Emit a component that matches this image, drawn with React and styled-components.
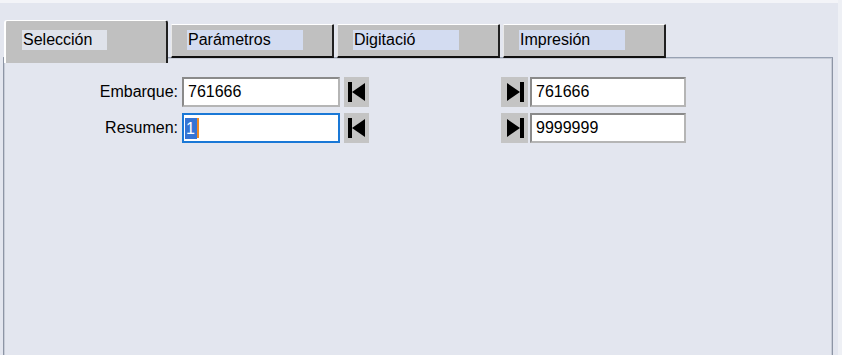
import styled, { createGlobalStyle } from "styled-components"

const Global = createGlobalStyle`
  html, body {
    margin: 0;
    padding: 0;
    background: #e3e6ef;
    font-family: "Liberation Sans", Arial, sans-serif;
  }
`

const tabs = [
  { label: "Selección", width: 85, active: true },
  { label: "Parámetros", width: 116 },
  { label: "Digitació", width: 106 },
  { label: "Impresión", width: 106 },
]

function FirstIcon() {
  return (
    <svg width="18" height="20" viewBox="0 0 18 20">
      <rect x="0" y="0" width="4" height="20" fill="#000" />
      <polygon points="4,10 17,1 17,19" fill="#000" />
    </svg>
  )
}

function LastIcon() {
  return (
    <svg width="18" height="20" viewBox="0 0 18 20">
      <polygon points="1,1 14,10 1,19" fill="#000" />
      <rect x="14" y="0" width="4" height="20" fill="#000" />
    </svg>
  )
}

export default function App() {
  return (
    <>
      <Global />
      <Window>
        <TopStrip />
        <TabStrip>
          {tabs.map((t) => (
            <Tab key={t.label} $active={t.active}>
              <TabLabel $active={t.active} style={{ width: t.width }}>
                {t.label}
              </TabLabel>
            </Tab>
          ))}
        </TabStrip>
        <Panel>
          <Row>
            <Label>Embarque:</Label>
            <Field>761666</Field>
            <NavButton>
              <FirstIcon />
            </NavButton>
            <Spacer />
            <NavButton $right>
              <LastIcon />
            </NavButton>
            <Field $narrow>761666</Field>
          </Row>
          <Row>
            <Label>Resumen:</Label>
            <Field $focused>
              <Selected>1</Selected>
              <Caret />
            </Field>
            <NavButton>
              <FirstIcon />
            </NavButton>
            <Spacer />
            <NavButton $right>
              <LastIcon />
            </NavButton>
            <Field $narrow>9999999</Field>
          </Row>
        </Panel>
      </Window>
    </>
  )
}

const Window = styled.div`
  width: 842px;
  height: 355px;
  overflow: hidden;
  display: flex;
  flex-direction: column;
  background: #e3e6ef;
  border-right: 4px solid #eef0f5;
  box-sizing: border-box;
`
const TopStrip = styled.div`
  height: 3px;
  background: #f3f4f8;
  margin-bottom: 17px;
`
const TabStrip = styled.div`
  display: flex;
  align-items: flex-start;
  height: 37px;
  padding-left: 4px;
  gap: 3px;
`
const Tab = styled.div`
  position: relative;
  z-index: ${(p) => (p.$active ? 2 : 1)};
  box-sizing: border-box;
  width: ${(p) => (p.$active ? 164 : 163)}px;
  height: ${(p) => (p.$active ? 43 : 34)}px;
  margin-top: ${(p) => (p.$active ? 0 : 4)}px;
  background: #c0c0c0;
  border-top: 1px solid #ffffff;
  border-left: ${(p) => (p.$active ? "2px solid #ffffff" : "1px solid #e8e8e8")};
  border-right: 2px solid #202020;
  border-bottom: ${(p) => (p.$active ? "none" : "2px solid #101010")};
  border-radius: ${(p) => (p.$active ? "3px 3px 0 0" : "1px 1px 0 0")};
  padding-top: ${(p) => (p.$active ? 9 : 5)}px;
  padding-left: ${(p) => (p.$active ? 16 : 15)}px;
`
const TabLabel = styled.div`
  height: 20px;
  line-height: 20px;
  background: ${(p) => (p.$active ? "#dfe2ea" : "#d3dcf1")};
  color: #000;
  font-size: 16px;
  padding-left: 1px;
  box-sizing: border-box;
`
const Panel = styled.div`
  flex: 1;
  width: 830px;
  margin-left: 3px;
  box-sizing: border-box;
  border-top: 1px solid #98a2b3;
  border-left: 1px solid #8d95a5;
  border-right: 1px solid #8d95a5;
  box-shadow: inset -1px 0 0 #c7ccd7, inset 1px 0 0 #c7ccd7, inset 0 1px 0 #c7ccd7;
  padding-top: 19px;
  display: flex;
  flex-direction: column;
  gap: 6px;
`
const Row = styled.div`
  display: flex;
  align-items: center;
  height: 30px;
`
const Label = styled.div`
  width: 174px;
  text-align: right;
  font-size: 16px;
  color: #000;
  margin-right: 4px;
`
const Field = styled.div`
  box-sizing: border-box;
  width: ${(p) => (p.$narrow ? 156 : 158)}px;
  height: 30px;
  background: #ffffff;
  border: ${(p) => (p.$focused ? "2px solid #1a78d6" : "2px solid #8a8a8a")};
  border-right-color: ${(p) => (p.$focused ? "#1a78d6" : "#b5b5b5")};
  border-bottom-color: ${(p) => (p.$focused ? "#1a78d6" : "#b5b5b5")};
  padding-left: ${(p) => (p.$focused ? 1 : 4)}px;
  display: flex;
  align-items: center;
  font-size: 16px;
  color: #000;
`
const Selected = styled.span`
  background: #3574d4;
  color: #ffffff;
  line-height: 21px;
  padding: 0 2px 0 1px;
`
const Caret = styled.span`
  width: 2px;
  height: 20px;
  background: #f08a24;
`
const NavButton = styled.div`
  box-sizing: border-box;
  width: ${(p) => (p.$right ? 27 : 25)}px;
  height: 30px;
  margin-left: ${(p) => (p.$right ? 0 : 4)}px;
  margin-right: ${(p) => (p.$right ? 2 : 0)}px;
  background: #c4c4c4;
  display: flex;
  align-items: center;
  justify-content: center;
`
const Spacer = styled.div`
  width: 132px;
`
